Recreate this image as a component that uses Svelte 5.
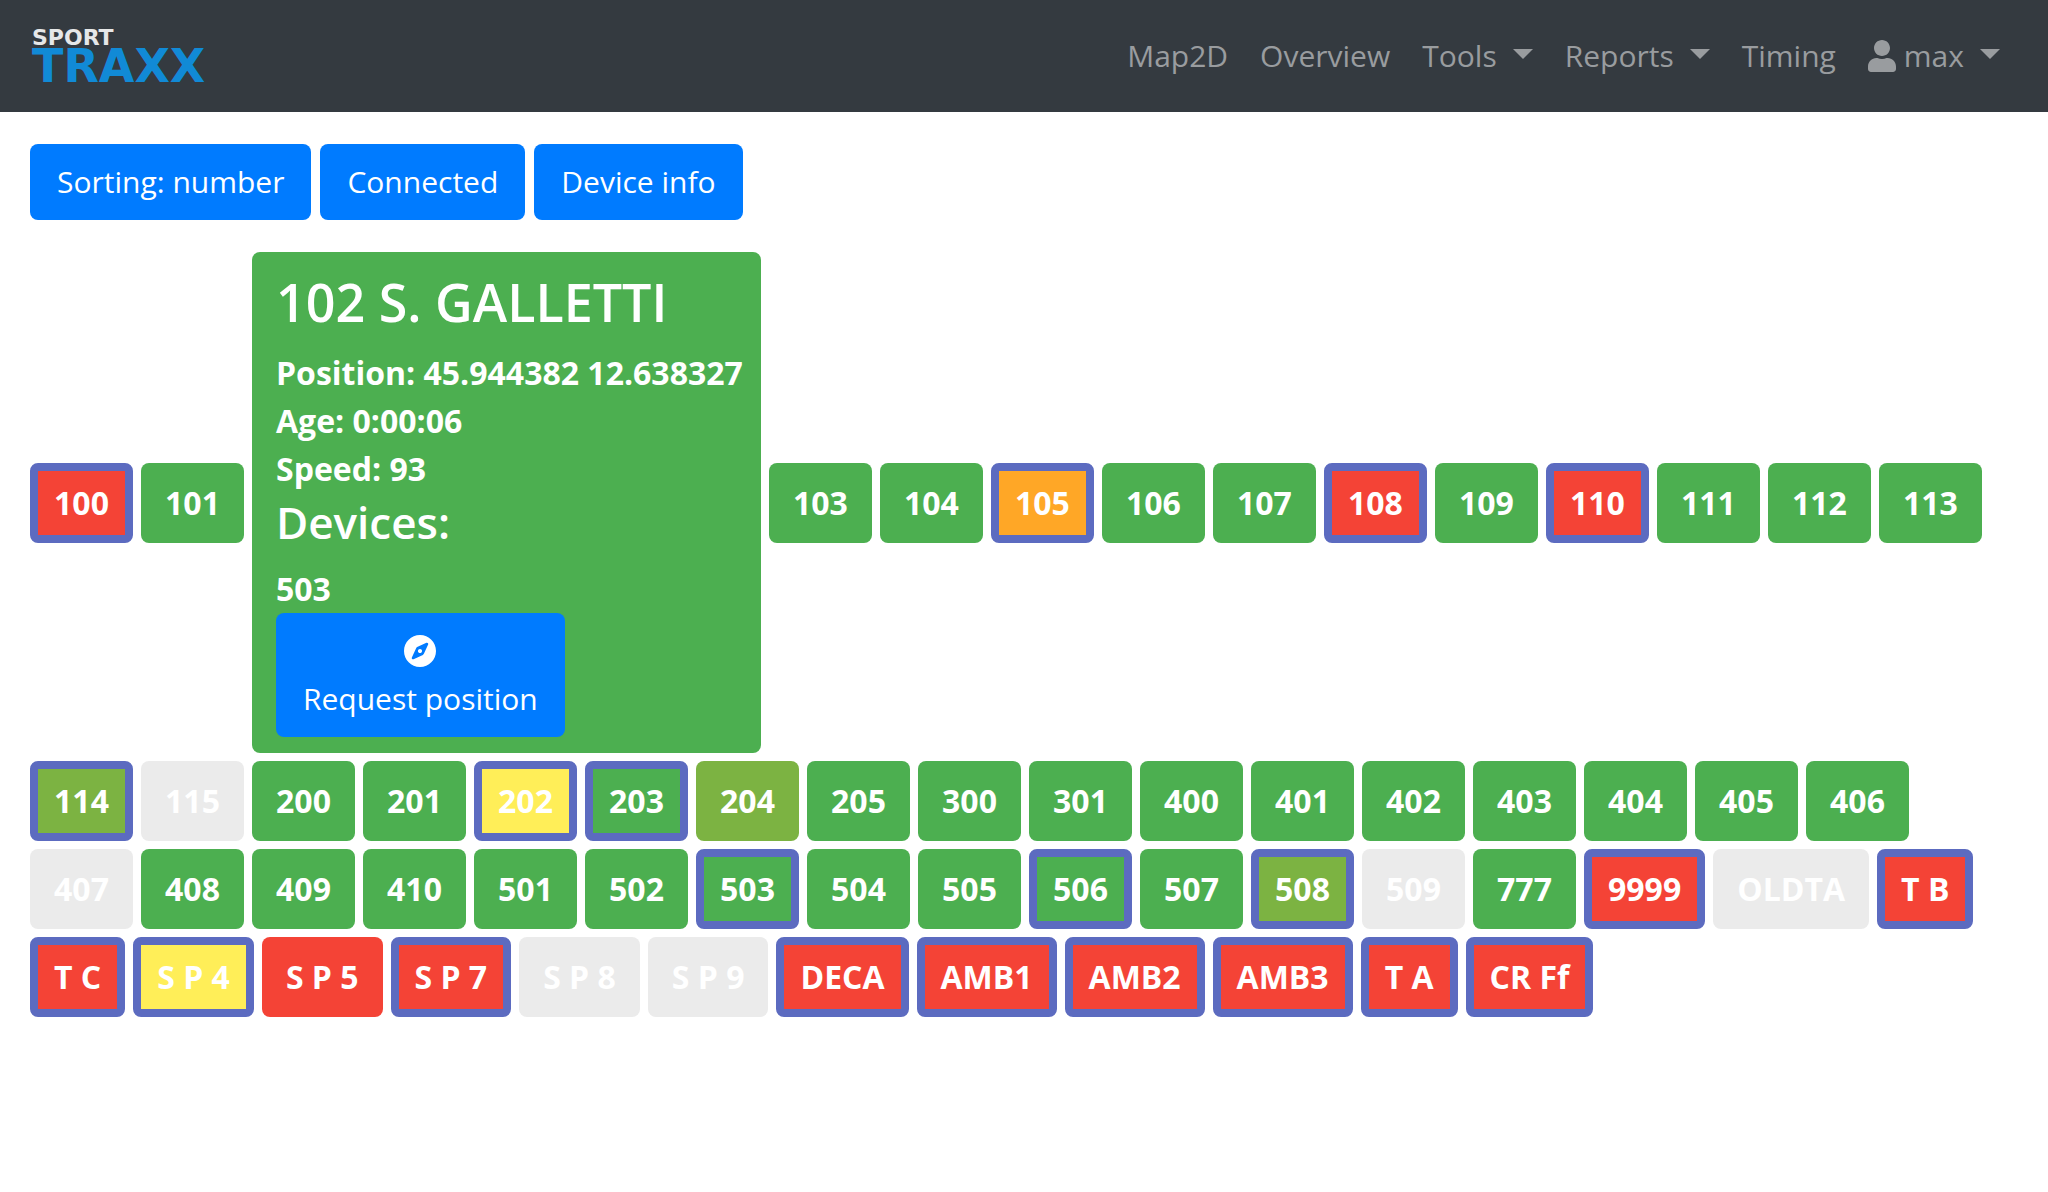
<script>
  const links = [
    { label: 'Map2D' },
    { label: 'Overview' },
    { label: 'Tools', menu: true },
    { label: 'Reports', menu: true },
    { label: 'Timing' },
    { label: 'max', menu: true, user: true }
  ];

  const filters = ['Sorting: number', 'Connected', 'Device info'];

  const red = ['108', '110', '100', '9999', 'T B', 'T C', 'S P 5', 'S P 7', 'DECA', 'AMB1', 'AMB2', 'AMB3', 'T A', 'CR Ff'];
  const yellow = ['202', 'S P 4'];
  const lime = ['114', '204', '508'];
  const orange = ['105'];
  const off = ['115', '407', '509', 'OLDTA', 'S P 8', 'S P 9'];
  const framed = ['100', '105', '108', '110', '114', '202', '203', '503', '506', '508', '9999', 'T B', 'T C', 'S P 4', 'S P 7', 'DECA', 'AMB1', 'AMB2', 'AMB3', 'T A', 'CR Ff'];

  const names = [
    '100', '101', '102', '103', '104', '105', '106', '107', '108', '109', '110', '111', '112', '113',
    '114', '115', '200', '201', '202', '203', '204', '205', '300', '301', '400', '401', '402', '403', '404', '405', '406',
    '407', '408', '409', '410', '501', '502', '503', '504', '505', '506', '507', '508', '509', '777', '9999', 'OLDTA', 'T B',
    'T C', 'S P 4', 'S P 5', 'S P 7', 'S P 8', 'S P 9', 'DECA', 'AMB1', 'AMB2', 'AMB3', 'T A', 'CR Ff'
  ];

  function tone(name) {
    if (red.includes(name)) return 'red';
    if (yellow.includes(name)) return 'yellow';
    if (lime.includes(name)) return 'lime';
    if (orange.includes(name)) return 'orange';
    if (off.includes(name)) return 'off';
    return 'green';
  }

  let openTile = $state('102');
</script>

<header class="navbar">
  <a class="brand" href="#home">
    <span class="brand-top">SPORT</span>
    <span class="brand-main">TRAXX</span>
  </a>
  <nav class="links">
    {#each links as link}
      <a class="link" href="#{link.label}">
        {#if link.user}
          <svg class="user" viewBox="0 0 448 512" aria-hidden="true">
            <path d="M224 256c70.7 0 128-57.3 128-128S294.7 0 224 0 96 57.3 96 128s57.3 128 128 128zm89.6 32h-16.7c-22.2 10.2-46.9 16-72.9 16s-50.6-5.8-72.9-16h-16.7C60.2 288 0 348.2 0 422.4V464c0 26.5 21.5 48 48 48h352c26.5 0 48-21.5 48-48v-41.6c0-74.2-60.2-134.4-134.4-134.4z" />
          </svg>
        {/if}
        <span>{link.label}</span>
        {#if link.menu}<span class="caret"></span>{/if}
      </a>
    {/each}
  </nav>
</header>

<main>
  <div class="filters">
    {#each filters as filter}
      <button class="btn" type="button">{filter}</button>
    {/each}
  </div>

  <div class="tiles">
    {#each names as name}
      {#if name === openTile}
        <section class="card">
          <h3>102 S. GALLETTI</h3>
          <p>Position: 45.944382 12.638327</p>
          <p>Age: 0:00:06</p>
          <p>Speed: 93</p>
          <h4>Devices:</h4>
          <p>503</p>
          <button class="btn request" type="button">
            <span class="icon-line">
              <svg class="compass" viewBox="0 8 496 496" aria-hidden="true">
                <path d="M225.38 233.37c-12.5 12.5-12.5 32.76 0 45.25 12.49 12.5 32.76 12.5 45.25 0 12.5-12.5 12.5-32.76 0-45.25-12.5-12.49-32.76-12.49-45.25 0zM248 8C111.03 8 0 119.03 0 256s111.03 248 248 248 248-111.03 248-248S384.97 8 248 8zm126.14 148.05L308.17 300.4a31.938 31.938 0 0 1-15.77 15.77l-144.34 65.97c-16.65 7.61-33.81-9.55-26.2-26.2l65.98-144.35a31.938 31.938 0 0 1 15.77-15.77l144.34-65.97c16.65-7.6 33.8 9.55 26.19 26.2z" />
              </svg>
            </span>
            <span>Request position</span>
          </button>
        </section>
      {:else}
        <button class="tile {tone(name)}" class:framed={framed.includes(name)} class:number={!isNaN(Number(name))} type="button">{name}</button>
      {/if}
    {/each}
  </div>
</main>

<style>
  :global(body) {
    background: #fff;
    font-family: 'Open Sans', 'Noto Sans', sans-serif;
    font-size: 30px;
    line-height: 48px;
  }

  .navbar {
    display: flex;
    align-items: center;
    justify-content: space-between;
    min-height: 112px;
    padding: 0 32px;
    box-sizing: border-box;
    background: #343a40;
  }

  .brand {
    display: flex;
    flex-direction: column;
    gap: 4px;
    font-family: 'DejaVu Sans', sans-serif;
    font-weight: 700;
    text-decoration: none;
  }

  .brand-top {
    font-size: 22px;
    line-height: 16px;
    color: #e6e7e8;
  }

  .brand-main {
    font-size: 46px;
    line-height: 32px;
    color: #118ad6;
  }

  .links {
    display: flex;
  }

  .link {
    display: flex;
    align-items: center;
    gap: 8px;
    padding: 16px;
    color: #999c9f;
    text-decoration: none;
  }

  .user {
    width: 28px;
    height: 32px;
    fill: currentColor;
  }

  .caret {
    width: 0;
    margin: 0 0 4px 8px;
    border-top: 10px solid currentColor;
    border-left: 10px solid transparent;
    border-right: 10px solid transparent;
  }

  main {
    padding: 32px 30px;
  }

  .filters {
    display: flex;
    flex-wrap: wrap;
    gap: 9px;
    margin-bottom: 32px;
  }

  button {
    border: 0;
    border-radius: 8px;
    color: #fff;
    font-family: inherit;
    line-height: 48px;
    cursor: pointer;
  }

  .btn {
    padding: 14px 27px;
    background: #007bff;
    font-size: 30px;
  }

  .tiles {
    display: flex;
    flex-wrap: wrap;
    align-items: center;
    gap: 8px;
  }

  .tile {
    padding: 16px 24px;
    font-size: 32px;
    font-weight: 700;
    white-space: nowrap;
  }

  .number {
    min-width: 103px;
  }

  .framed {
    padding: 8px 16px;
    border: 8px solid #5c6bc0;
  }

  .green {
    background-color: #4caf50;
  }

  .lime {
    background-color: #7cb342;
  }

  .yellow {
    background-color: #ffee58;
  }

  .orange {
    background-color: #ffa726;
  }

  .red {
    background-color: #f44336;
  }

  .off {
    background-color: #ebebeb;
  }

  .card {
    padding: 16px 18px 16px 24px;
    border-radius: 8px;
    background: #4caf50;
    color: #fff;
    font-size: 32px;
    font-weight: 700;
  }

  h3,
  h4 {
    margin: 0 0 14px;
    font-weight: 600;
  }

  h3 {
    font-size: 52px;
    line-height: 67px;
  }

  h4 {
    font-size: 44px;
    line-height: 58px;
  }

  p {
    margin: 0;
  }

  .request {
    display: flex;
    flex-direction: column;
    align-items: center;
  }

  .icon-line {
    display: flex;
    align-items: center;
    height: 48px;
  }

  .compass {
    width: 32px;
    height: 32px;
    fill: #fff;
  }
</style>
